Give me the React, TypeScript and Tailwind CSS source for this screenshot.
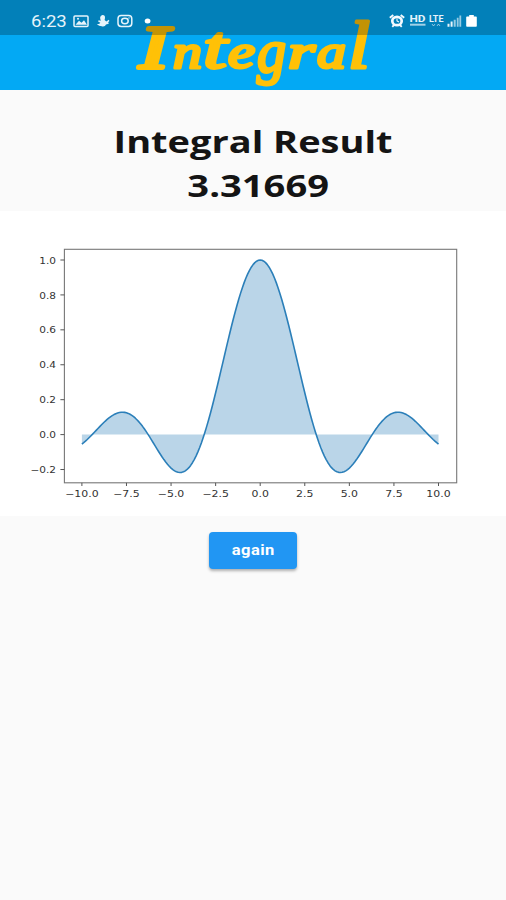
const AXES = { left: 64.4, right: 456.7, top: 38.3, bottom: 271.8 };
const toX = (v: number) => 260.2 + v * 17.83;
const toY = (v: number) => 223.6 - v * 174.6;

const samples = Array.from({ length: 201 }, (_, i) => {
  const x = -10 + i * 0.1;
  const y = Math.abs(x) < 1e-6 ? 1 : Math.sin(x) / x;
  return `${toX(x).toFixed(2)},${toY(y).toFixed(2)}`;
});

const xTicks = [-10, -7.5, -5, -2.5, 0, 2.5, 5, 7.5, 10];
const yTicks = [-0.2, 0, 0.2, 0.4, 0.6, 0.8, 1];
const label = (v: number) => (v < 0 ? '\u2212' : '') + Math.abs(v).toFixed(1);

function Chart() {
  return (
    <svg className="block h-[305px] w-full bg-white" viewBox="0 0 506 305">
      <polygon
        points={`${toX(-10)},${toY(0)} ${samples.join(' ')} ${toX(10)},${toY(0)}`}
        fill="#bad5e8"
      />
      <polyline points={samples.join(' ')} fill="none" stroke="#2b7fb9" strokeWidth="1.6" strokeLinejoin="round" />
      <rect
        x={AXES.left}
        y={AXES.top}
        width={AXES.right - AXES.left}
        height={AXES.bottom - AXES.top}
        fill="none"
        stroke="#777"
        strokeWidth="1.1"
      />
      <g stroke="#555" strokeWidth="1" fill="none">
        {xTicks.map((v) => (
          <line key={v} x1={toX(v)} x2={toX(v)} y1={AXES.bottom} y2={AXES.bottom + 3.2} />
        ))}
        {yTicks.map((v) => (
          <line key={v} x1={AXES.left - 4} x2={AXES.left} y1={toY(v)} y2={toY(v)} />
        ))}
      </g>
      <g fontFamily="'DejaVu Sans', sans-serif" fontSize="8.8" fill="#333">
        {xTicks.map((v) => (
          <text key={v} textAnchor="middle" transform={`translate(${toX(v)} 285.6) scale(1.24 1)`}>
            {label(v)}
          </text>
        ))}
        {yTicks.map((v) => (
          <text key={v} textAnchor="end" transform={`translate(56 ${toY(v) + 3.6}) scale(1.2 1)`}>
            {label(v)}
          </text>
        ))}
      </g>
    </svg>
  );
}

function Wordmark() {
  return (
    <svg
      className="block h-[90px] w-full"
      viewBox="0 0 506 90"
      fill="#ffc107"
      stroke="#ffc107"
      strokeLinejoin="round"
      strokeLinecap="round"
    >
      <text y="68" fontFamily="'Liberation Serif', serif" fontStyle="italic" fontSize="48" strokeWidth="3">
        <tspan x="139" fontSize="62" strokeWidth="3.8" textLength="30" lengthAdjust="spacingAndGlyphs">I</tspan>
        <tspan x="173" textLength="29" lengthAdjust="spacingAndGlyphs">n</tspan>
        <tspan x="203" fontSize="62" textLength="24" lengthAdjust="spacingAndGlyphs">t</tspan>
        <tspan x="228" textLength="27" lengthAdjust="spacingAndGlyphs">e</tspan>
        <tspan x="257" dy="4" fontSize="62" textLength="29" lengthAdjust="spacingAndGlyphs">g</tspan>
        <tspan x="288" dy="-4" textLength="27" lengthAdjust="spacingAndGlyphs">r</tspan>
        <tspan x="317" textLength="29" lengthAdjust="spacingAndGlyphs">a</tspan>
        <tspan x="348" fontSize="67" textLength="22" lengthAdjust="spacingAndGlyphs">l</tspan>
      </text>
    </svg>
  );
}

function LeftIcons() {
  return (
    <svg className="h-[35px] w-[84px]" viewBox="72 0 84 35" fill="none" stroke="#e6f4fb">
      <rect x="74" y="16" width="14" height="10.5" rx="1" strokeWidth="1.5" />
      <path d="M75.5 24.7l3.5-4 2.5 2 2.5-2.5 3 4.5z" fill="#e6f4fb" stroke="none" />
      <circle cx="78" cy="18.8" r="1" fill="#e6f4fb" stroke="none" />
      <path
        d="M102 15.2c2-.5 3.3.9 3 2.7l-.4 2.2 1.7 1.5 2.5-1.8.6 1.3-1.2 1.1.6 1.6-2.8.8c-.7 1.7-2.5 2.3-4.3 1.6-1.6-.1-3.4-.4-4.8-2.2 1.8.3 2.9-.3 3.4-1.2l-2.2-1.3.5-1.3 2.2.5-.5-1.6c-.5-2 .2-3.4 1.7-3.9z"
        fill="#e6f4fb"
        stroke="none"
      />
      <rect x="118" y="15.5" width="13.8" height="11" rx="3.2" strokeWidth="1.5" />
      <ellipse cx="124.9" cy="21" rx="3.3" ry="2.7" strokeWidth="1.5" />
      <circle cx="129" cy="17.9" r=".7" fill="#e6f4fb" stroke="none" />
      <ellipse cx="147.6" cy="21" rx="2.9" ry="2.5" fill="#fff" stroke="none" />
    </svg>
  );
}

function RightIcons() {
  return (
    <svg className="h-[35px] w-[92px]" viewBox="387 0 92 35" fill="#e6f4fb">
      <g fill="none" stroke="#f4faff">
        <ellipse cx="397" cy="21" rx="4.7" ry="4.2" strokeWidth="2.7" />
        <path d="M389.8 17.8l3.5-2.8M404.2 17.8l-3.5-2.8M392.3 26.8l1.8-2M401.7 26.8l-1.8-2" strokeWidth="1.8" />
        <path d="M397 18.6V21l2 1.1" strokeWidth="1.1" />
      </g>
      <g fontFamily="Roboto, sans-serif" fontWeight="700">
        <text x="409.5" y="22.4" fontSize="9" textLength="16" lengthAdjust="spacingAndGlyphs">HD</text>
        <text x="429" y="21.5" fontSize="8.5" textLength="14.5" lengthAdjust="spacingAndGlyphs">LTE</text>
      </g>
      <path d="M410 23.7h15.5v2H410z" opacity=".7" />
      <path d="M432 24l1.5 2 1.5-2M437 26l1.5-2 1.5 2" fill="none" stroke="#e6f4fb" strokeWidth="1" opacity=".6" />
      <path d="M447.5 23.8h2v3h-2zM450.6 21.6h2v5.2h-2z" />
      <path d="M453.7 19.7h2v7.1h-2zM456.8 17.7h1.8v9.1h-1.8zM459.4 15.6h1.8v11.2h-1.8z" opacity=".65" />
      <path d="M467 16.5h2.2V15h4.6v1.5h2.2a.8.8 0 01.8.8v8.7a.8.8 0 01-.8.8h-9a.8.8 0 01-.8-.8v-8.7a.8.8 0 01.8-.8z" fill="#fff" />
    </svg>
  );
}

export default function App() {
  return (
    <div className="flex h-[900px] w-[506px] flex-col overflow-hidden bg-[#fafafa] font-['Open_Sans',sans-serif]">
      <header className="relative h-[90px] shrink-0 overflow-hidden bg-[#03a9f4]">
        <Wordmark />
        <div className="absolute inset-x-0 top-0 flex h-[35px] items-center bg-black/24 pr-[27px] pl-[31px]">
          <span className="w-[41px] text-[16px] leading-none text-[#e6f4fb] [font-family:Roboto,sans-serif]">
            <span className="inline-block origin-left translate-y-[3.5px] scale-x-[1.16]">6:23</span>
          </span>
          <LeftIcons />
          <div className="ml-auto">
            <RightIcons />
          </div>
        </div>
      </header>
      <h1 className="flex h-[121px] shrink-0 flex-col items-center pt-[29px] text-[30.5px] leading-[44px] font-bold whitespace-nowrap text-[#141414]">
        <span className="scale-x-[1.245]">Integral Result</span>
        <span className="translate-x-[5.5px] scale-x-[1.25]">3.31669</span>
      </h1>
      <Chart />
      <div className="flex justify-center pt-[15.5px]">
        <button className="h-[37px] w-[88px] rounded-[4px] bg-[#2196f3] text-[14px] leading-none font-bold text-white shadow-[0_2px_3px_rgba(0,0,0,0.3)]">
          <span className="inline-block scale-x-[1.18] tracking-[0.4px] [font-family:Roboto,sans-serif]">again</span>
        </button>
      </div>
    </div>
  );
}
